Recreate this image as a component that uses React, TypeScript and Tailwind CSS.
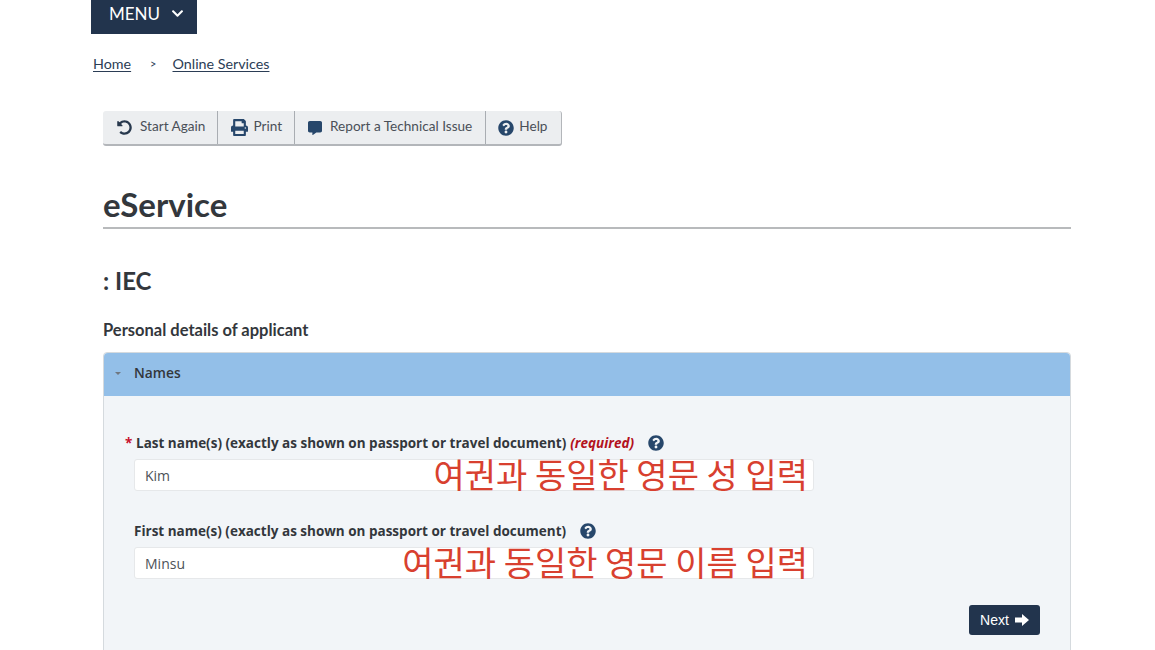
import React from "react";
import { FaChevronDown, FaPrint, FaCommentAlt, FaQuestionCircle, FaUndoAlt } from "react-icons/fa";

function ToolButton({ icon, label, className }: { icon: React.ReactNode; label: string; className: string }) {
  return (
    <div className={`flex h-full items-center ${className}`}>
      {icon}
      <span className="pb-[2px] text-[13.6px] text-[#4a5058]">{label}</span>
    </div>
  );
}

function Help() {
  return <FaQuestionCircle className="text-[16px] text-[#27476b]" />;
}

function Field({ label, value, note, star }: { label: string; value: string; note: string; star?: boolean }) {
  return (
    <div className="w-[680px]">
      <div className={`relative flex h-[22px] items-center text-[13.5px] font-bold leading-[16px] text-[#33373c] ${star ? "pl-[2px]" : ""}`}>
        {star && <span className="absolute left-[-9px] top-[3px] text-[#c8102e]">*</span>}
        <span>{label}</span>
        {star && <em className="ml-[4px] text-[#b3121d]">(required)</em>}
        <span className="ml-[14px]"><Help /></span>
      </div>
      <div className="relative mt-[5px] flex h-[32px] items-center rounded-[3px] border border-[#e6e8ea] bg-white pl-[10px] text-[14px] text-[#4d5258]">
        {value}
        <span className="absolute right-[5px] top-[-1px] h-[30px] whitespace-nowrap text-[34px] font-normal leading-[30px] text-[#d8402f] [font-family:'Noto_Sans_CJK_KR',sans-serif]">{note}</span>
      </div>
    </div>
  );
}

export default function App() {
  return (
    <div className="h-[650px] w-[1155px] overflow-hidden bg-white pl-[91px] [font-family:Lato,sans-serif]">
      <div className="flex h-[34px] w-[106px] items-center gap-[11px] bg-[#22344d] pb-[7px] pl-[18px] text-[17px] text-white">
        MENU <FaChevronDown className="text-[13px]" />
      </div>

      <div className="mt-[21px] flex h-[18px] items-center pl-[2px] text-[14.3px] text-[#2b3d55]">
        <span className="underline underline-offset-2">Home</span>
        <span className="ml-[19px] text-[11px]">&gt;</span>
        <span className="ml-[16px] underline underline-offset-2">Online Services</span>
      </div>

      <div className="ml-[12px] w-[968px]">
        <div className="mt-[38px] flex h-[35px] w-fit items-center rounded-[3px] border-r border-b-2 border-[#b3b6ba] bg-[#eceef0]">
          <ToolButton className="gap-[8px] border-r border-[#a9adb2] pl-[14px] pr-[12px]" icon={<FaUndoAlt className="text-[15px] text-[#27384d]" />} label="Start Again" />
          <ToolButton className="gap-[5px] border-r border-[#a9adb2] pl-[13px] pr-[12px]" icon={<FaPrint className="text-[17px] text-[#27476b]" />} label="Print" />
          <ToolButton className="gap-[8px] border-r border-[#a9adb2] pl-[13px] pr-[13px]" icon={<FaCommentAlt className="text-[14px] text-[#27476b]" />} label="Report a Technical Issue" />
          <ToolButton className="gap-[5px] pl-[12px] pr-[14px]" icon={<FaQuestionCircle className="text-[16px] text-[#27476b]" />} label="Help" />
        </div>

        <h1 className="mt-[36px] h-[45px] text-[33px] font-bold leading-[44px] text-[#33373c]">eService</h1>
        <div className="h-[2px] bg-[#b8babc]" />

        <h2 className="mt-[36px] text-[24px] font-bold leading-[32px] text-[#33373c]">: IEC</h2>
        <h3 className="mt-[22px] text-[16.5px] font-bold leading-[22px] text-[#33373c]">Personal details of applicant</h3>

        <div className="mt-[11px] h-[320px] rounded-t-[4px] border border-[#d5dade] bg-[#f2f5f8]">
          <div className="flex h-[43px] items-center rounded-t-[4px] bg-[#93bfe8] pb-[2px] pl-[11px] text-[13.8px] font-semibold text-[#33373c] [font-family:'Open_Sans',sans-serif]">
            <span className="h-0 w-0 border-x-[3px] border-t-[3px] border-x-transparent border-t-[#6f7780]" />
            <span className="ml-[13px]">Names</span>
          </div>
          <div className="pl-[30px] pr-[30px] pt-[36px] [font-family:'Open_Sans',sans-serif]">
            <Field star label="Last name(s) (exactly as shown on passport or travel document)" value="Kim" note="여권과 동일한 영문 성 입력" />
            <div className="mt-[29px]">
              <Field label="First name(s) (exactly as shown on passport or travel document)" value="Minsu" note="여권과 동일한 영문 이름 입력" />
            </div>
            <div className="mt-[26px] flex justify-end">
              <div className="flex h-[30px] w-[71px] items-center justify-center gap-[6px] rounded-[3px] bg-[#22344d] text-[14px] text-white [font-family:'Liberation_Sans',sans-serif]">
                Next
                <svg viewBox="0 0 14 12" className="h-[12px] w-[14px]" fill="currentColor"><path d="M0 3.5h7V0l7 6-7 6V8.5H0z" /></svg>
              </div>
            </div>
          </div>
        </div>
      </div>
    </div>
  );
}
